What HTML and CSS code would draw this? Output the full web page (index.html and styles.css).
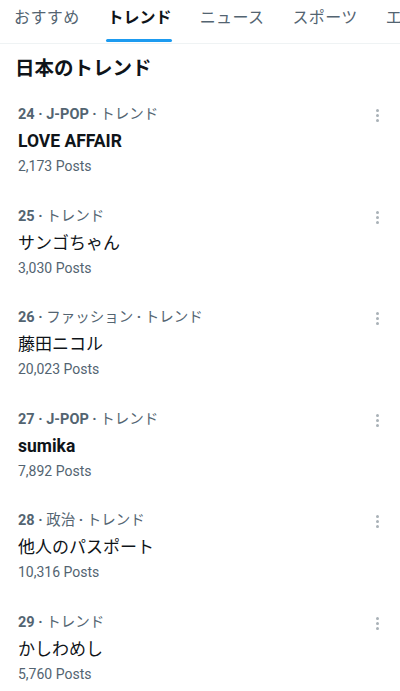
FILE: index.html
```html
<!DOCTYPE html>
<html lang="ja">
<head>
    <meta charset="UTF-8">
    <meta name="viewport" content="width=device-width, initial-scale=1.0">
    <title>トレンド</title>
    <link rel="stylesheet" href="styles.css">
</head>
<body>
    <nav class="tabs">
        <div class="tab">おすすめ</div>
        <div class="tab active">トレンド</div>
        <div class="tab">ニュース</div>
        <div class="tab">スポーツ</div>
        <div class="tab">エンタメ</div>
    </nav>

    <h2 class="heading">日本のトレンド</h2>

    <div class="trend">
        <div class="meta">24 · J-POP · <span class="jp">トレンド</span></div>
        <div class="title">LOVE AFFAIR</div>
        <div class="count">2,173 Posts</div>
        <div class="more"><span></span><span></span><span></span></div>
    </div>
    <div class="trend">
        <div class="meta">25 · <span class="jp">トレンド</span></div>
        <div class="title jp">サンゴちゃん</div>
        <div class="count">3,030 Posts</div>
        <div class="more"><span></span><span></span><span></span></div>
    </div>
    <div class="trend">
        <div class="meta">26 · <span class="jp">ファッション</span> · <span class="jp">トレンド</span></div>
        <div class="title jp">藤田ニコル</div>
        <div class="count">20,023 Posts</div>
        <div class="more"><span></span><span></span><span></span></div>
    </div>
    <div class="trend">
        <div class="meta">27 · J-POP · <span class="jp">トレンド</span></div>
        <div class="title">sumika</div>
        <div class="count">7,892 Posts</div>
        <div class="more"><span></span><span></span><span></span></div>
    </div>
    <div class="trend">
        <div class="meta">28 · <span class="jp">政治</span> · <span class="jp">トレンド</span></div>
        <div class="title jp">他人のパスポート</div>
        <div class="count">10,316 Posts</div>
        <div class="more"><span></span><span></span><span></span></div>
    </div>
    <div class="trend">
        <div class="meta">29 · <span class="jp">トレンド</span></div>
        <div class="title jp">かしわめし</div>
        <div class="count">5,760 Posts</div>
        <div class="more"><span></span><span></span><span></span></div>
    </div>
</body>
</html>
```

FILE: styles.css
```css
body {
    margin: 0;
    background: #fff;
    color: #0f1419;
    font-family: Roboto, "Noto Sans CJK JP", sans-serif;
    overflow: hidden;
}
.tabs {
    display: flex;
    gap: 28px;
    padding-left: 14px;
    height: 43px;
    border-bottom: 1px solid #eff3f4;
    white-space: nowrap;
    overflow: hidden;
}
.tab {
    position: relative;
    font-size: 16px;
    letter-spacing: 0.4px;
    line-height: 36px;
    color: #536471;
    flex-shrink: 0;
}
.tab.active {
    color: #0f1419;
    font-weight: bold;
    letter-spacing: 0;
}
.tab.active::after {
    content: "";
    position: absolute;
    left: -2px;
    right: 0;
    top: 39px;
    height: 3px;
    border-radius: 2px;
    background: #1d9bf0;
}
.heading {
    margin: 0;
    padding: 13px 15px 9px;
    font-size: 19.5px;
    line-height: 24px;
    font-weight: bold;
}
.trend {
    position: relative;
    padding: 16px 18px 16.5px;
}
.meta {
    font-size: 14.5px;
    line-height: 18px;
    color: #536471;
    font-weight: bold;
}
.meta .jp {
    font-weight: normal;
}
.title {
    margin-top: 6px;
    font-size: 17.5px;
    line-height: 22px;
    font-weight: bold;
}
.title.jp {
    font-size: 17px;
    font-weight: normal;
}
.count {
    margin-top: 5px;
    font-size: 14px;
    line-height: 18px;
    color: #536471;
}
.more {
    position: absolute;
    right: 21px;
    top: 19px;
    display: flex;
    flex-direction: column;
    gap: 2px;
}
.more span {
    width: 3px;
    height: 3px;
    border-radius: 50%;
    background: #a9b1b7;
}
```
